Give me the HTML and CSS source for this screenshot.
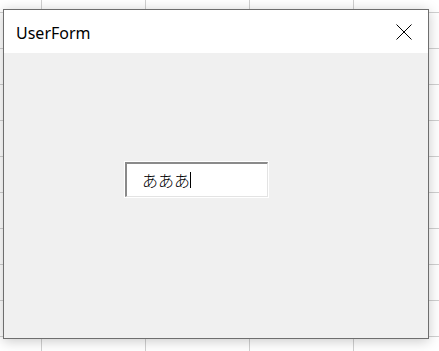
FILE: index.html
```html
<!DOCTYPE html>
<html lang="ja">
<head>
<meta charset="utf-8">
<title>UserForm</title>
<link rel="stylesheet" href="styles.css">
</head>
<body>
<div class="sheet">
  <div class="window">
    <div class="titlebar">
      <span class="title">UserForm</span>
      <svg class="close" width="16" height="16" viewBox="0 0 16 16">
        <path d="M0.5 0.5 L15.5 15.5 M15.5 0.5 L0.5 15.5" stroke="#000" stroke-width="1" fill="none"/>
      </svg>
    </div>
    <div class="client">
      <div class="textbox"><span class="text">あああ</span><span class="caret"></span></div>
    </div>
  </div>
</div>
</body>
</html>
```
FILE: styles.css
```css
html, body {
  margin: 0;
  padding: 0;
}
body {
  width: 439px;
  height: 351px;
  overflow: hidden;
  background: #fff;
}
.sheet {
  width: 439px;
  height: 351px;
  background-color: #fff;
  background-image:
    linear-gradient(to right, #d0d0d0 1px, transparent 1px),
    linear-gradient(to bottom, #d0d0d0 1px, transparent 1px);
  background-size: 104px 36px;
  background-position: 41px 12px;
  padding: 9px 0 0 3px;
  box-sizing: border-box;
}
.window {
  width: 426px;
  height: 330px;
  box-sizing: border-box;
  border: 1px solid #6e6e6e;
  background: #f0f0f0;
  box-shadow: 0 2px 12px rgba(0, 0, 0, 0.22);
  display: flex;
  flex-direction: column;
}
.titlebar {
  height: 43px;
  background: #fff;
  display: flex;
  align-items: center;
  justify-content: space-between;
  padding: 0 16px 0 12px;
  flex: none;
}
.title {
  font-family: "Noto Sans", "Open Sans", sans-serif;
  font-size: 16px;
  color: #000;
  margin-top: 2px;
}
.close {
  display: block;
  margin-top: 1px;
}
.client {
  flex: 1;
  padding: 108px 0 0 120px;
}
.textbox {
  width: 143px;
  height: 35px;
  box-sizing: border-box;
  background: #fff;
  border-style: solid;
  border-width: 2px 1px 1px 2px;
  border-color: #8a8a8a #e3e3e3 #e3e3e3 #8a8a8a;
  outline: 1px solid #fff;
  outline-offset: 0;
  display: flex;
  align-items: center;
  padding-left: 15px;
  margin: 1px 0 0 1px;
}
.text {
  font-family: "Noto Sans CJK JP", sans-serif;
  font-size: 16px;
  line-height: 17px;
  font-weight: 300;
  color: #000;
}
.caret {
  width: 1px;
  height: 16px;
  background: #000;
  margin-left: 0;
}
```
